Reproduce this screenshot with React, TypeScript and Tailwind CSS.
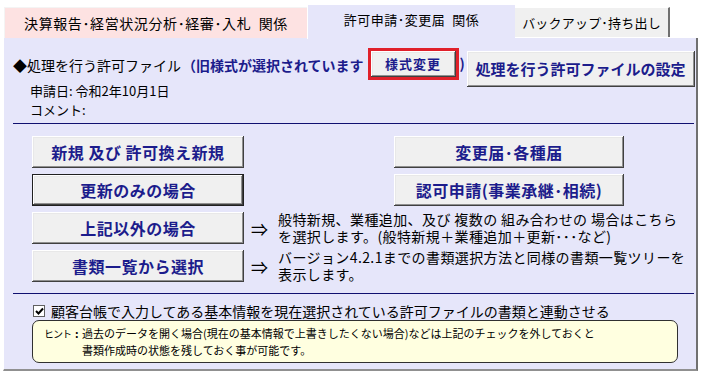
import React from "react";

const btn =
  "bg-[#f0f0f0] shadow-[inset_-1px_-1px_#404040,inset_1px_1px_#ffffff,inset_-2px_-2px_#909090,inset_2px_2px_#e8e8e8] flex items-center justify-center font-bold text-[#1c1c8c] whitespace-nowrap";

function Big({ label, def = false, w = "w-[212px]" }: { label: string; def?: boolean; w?: string }) {
  return (
    <div className={`${w} h-[32px] shrink-0 ${def ? "border border-[#202020]" : ""}`}>
      <div className={`${btn} w-full h-full text-[16px] leading-[20px] tracking-[0.5px]`}>{label}</div>
    </div>
  );
}

function Desc({ l1, l2 }: { l1: string; l2: string }) {
  return (
    <div className="flex items-center ml-[7px] text-[14px] leading-[17px] whitespace-nowrap">
      <span className="w-[27px] text-[17px] leading-[17px]">⇒</span>
      <span className="tracking-[0.4px]">
        {l1}
        <br />
        {l2}
      </span>
    </div>
  );
}

export default function App() {
  return (
    <div className="w-[711px] h-[375px] bg-white font-['Noto_Sans_CJK_JP',sans-serif] text-black overflow-hidden">
      {/* Tabs */}
      <div className="flex items-end h-[38px] pl-[4px]">
        <div className="w-[303px] h-[31px] bg-[#fde2e2] border-t border-l border-[#f4f4f4] flex items-center justify-center text-[14px] leading-[16px] tracking-[0.6px] whitespace-nowrap">
          決算報告･経営状況分析･経審･入札&nbsp;&nbsp;関係
        </div>
        <div className="w-[208px] h-[35px] mb-[-1px] bg-[#e6e6fa] border-t border-l border-white flex items-start pt-[7px] justify-center text-[13px] leading-[16px] tracking-[0.5px] relative z-10 whitespace-nowrap">
          許可申請･変更届&nbsp;&nbsp;関係
        </div>
        <div className="w-[155px] h-[30px] bg-[#f0f0f0] border-t border-white border-r-2 border-r-[#707070] flex items-center justify-center text-[13px] leading-[16px] tracking-[0.2px] mb-[1px] whitespace-nowrap">
          バックアップ･持ち出し
        </div>
      </div>
      {/* Panel */}
      <div className="ml-[3px] w-[695px] h-[333px] bg-[#e6e6fa] border-r-2 border-r-[#707070] border-b-2 border-b-[#909090] border-l border-l-white px-[9px]">
        <div className="flex items-start h-[43px] whitespace-nowrap">
          <span className="text-[14px] leading-[16px] mt-[19px] shrink-0">◆処理を行う許可ファイル</span>
          <span className="text-[14px] leading-[16px] font-bold text-[#1c1c8c] ml-[1px] mt-[19px] shrink-0">（旧様式が選択されています</span>
          <div className="border-[3px] border-[#e0202a] w-[91px] h-[32px] mt-[10px] ml-[4px] shrink-0">
            <div className={`${btn} w-full h-full text-[13px] leading-[16px] tracking-[1px]`}>様式変更</div>
          </div>
          <span className="text-[14px] leading-[16px] font-bold text-[#1c1c8c] mt-[17px] w-[7px] ml-[1px] shrink-0">)</span>
          <div className={`${btn} w-[228px] h-[36px] text-[15px] leading-[18px] mt-[13px] shrink-0`}>処理を行う許可ファイルの設定</div>
        </div>
        <div className="pl-[17px] text-[13px] leading-[19px] whitespace-nowrap">
          <div>申請日:&nbsp;令和2年10月1日</div>
          <div>コメント:</div>
        </div>
        <div className="h-[1px] bg-[#101070] mt-[4px] w-[681px]"></div>
        <div className="flex flex-col gap-[6px] mt-[12px] pl-[19px]">
          <div className="flex h-[32px]">
            <Big label="新規 及び 許可換え新規" />
            <div className="w-[150px]"></div>
            <Big label="変更届･各種届" w="w-[230px]" />
          </div>
          <div className="flex h-[32px]">
            <Big label="更新のみの場合" def />
            <div className="w-[150px]"></div>
            <Big label="認可申請(事業承継･相続)" w="w-[230px]" />
          </div>
          <div className="flex h-[32px] items-center">
            <Big label="上記以外の場合" />
            <Desc l1="般特新規、業種追加、及び 複数の 組み合わせの 場合はこちら" l2="を選択します。(般特新規＋業種追加＋更新･･･など)" />
          </div>
          <div className="flex h-[32px] items-center">
            <Big label="書類一覧から選択" />
            <Desc l1="バージョン4.2.1までの書類選択方法と同様の書類一覧ツリーを" l2="表示します。" />
          </div>
        </div>
        <div className="h-[1px] bg-[#101070] mt-[11px] w-[681px]"></div>
        <div className="flex items-center mt-[8px] pl-[20px] text-[14px] leading-[18px] whitespace-nowrap">
          <span className="w-[12px] h-[12px] bg-white border border-[#606060] flex items-center justify-center mr-[6px] shrink-0">
            <svg width="9" height="9" viewBox="0 0 9 9"><path d="M1 4 L3.5 6.5 L8 1.5" stroke="#000" strokeWidth="2" fill="none" /></svg>
          </span>
          顧客台帳で入力してある基本情報を現在選択されている許可ファイルの書類と連動させる
        </div>
        <div className="ml-[19px] w-[646px] h-[43px] bg-[#ffffe0] border border-[#303030] rounded-[7px] px-[11px] pt-[4px] text-[11px] leading-[17px] flex whitespace-nowrap">
          <span className="shrink-0 flex w-[38px]">
            <span className="text-[10px] tracking-[-1px]">ヒント</span>
            <span className="ml-[4px] font-bold">:</span>
          </span>
          <span>過去のデータを開く場合(現在の基本情報で上書きしたくない場合)などは上記のチェックを外しておくと<br />書類作成時の状態を残しておく事が可能です。</span>
        </div>
      </div>
    </div>
  );
}
